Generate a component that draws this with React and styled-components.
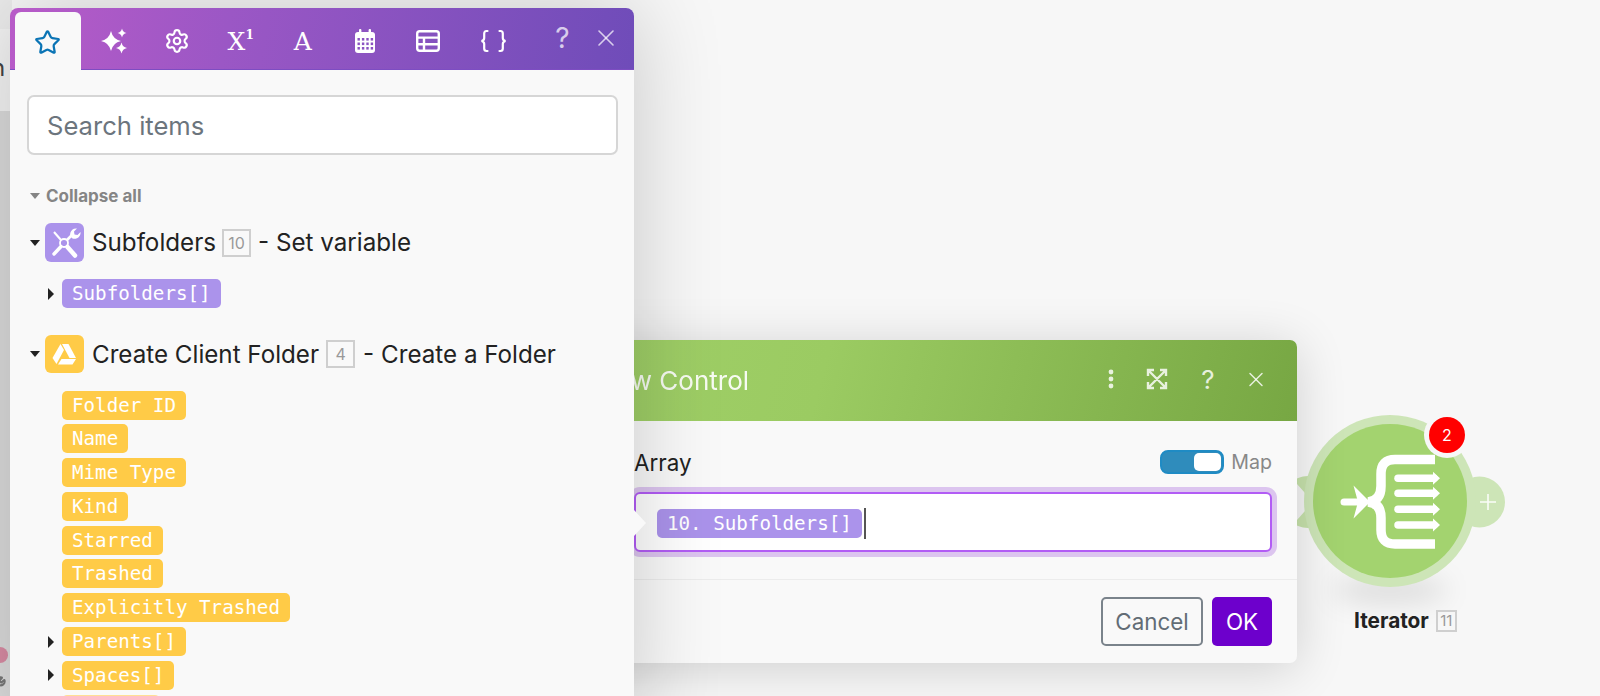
import React from "react";
import styled, { createGlobalStyle } from "styled-components";
import { Star, Settings, X, Wrench } from "lucide-react";

const GlobalStyle = createGlobalStyle`
  html, body {
    margin: 0;
    height: 100%;
  }
  body {
    font-family: Inter, "Noto Sans", sans-serif;
    background: #f7f7f7;
    color: #222;
  }
`;

const Canvas = styled.div`
  position: relative;
  width: 100vw;
  height: 100vh;
  overflow: hidden;
  background: #f7f7f7;
`;

/* bits of the page that peek out to the left of the panel */
const LeftStrip = styled.div`
  position: absolute;
  left: 0;
  top: 0;
  bottom: 0;
  width: 12px;
  display: flex;
  flex-direction: column;
  background: #dcdcdc;
  overflow: hidden;
`;

const StripTop = styled.div`
  height: 30px;
  background: #ececec;
`;

const StripMiddle = styled.div`
  height: 83px;
  background: #f4f4f4;
  color: #444;
  font-size: 24px;
  line-height: 30px;
  padding-top: 24px;
  box-sizing: border-box;
  text-indent: -9px;
`;

const StripDot = styled.div`
  width: 16px;
  height: 16px;
  border-radius: 50%;
  background: #d98ca4;
  margin: 536px 0 0 -8px;
`;

const StripTool = styled.div`
  margin: 13px 0 0 -10px;
  color: #777;
`;

/* mapping panel */
const Panel = styled.div`
  position: absolute;
  left: 10px;
  top: 8px;
  width: 624px;
  height: 720px;
  z-index: 3;
  background: #f9f9f9;
  border-radius: 8px 8px 0 0;
  box-shadow: 0 0 90px rgba(0, 0, 0, 0.2);
  overflow: visible;

  &::after {
    content: "";
    position: absolute;
    left: 100%;
    top: 502px;
    border-left: 12px solid #f9f9f9;
    border-top: 13px solid transparent;
    border-bottom: 13px solid transparent;
  }
`;

const TabBar = styled.div`
  display: flex;
  height: 62px;
  box-sizing: border-box;
  padding: 4px 7px 0 5px;
  border-radius: 8px 8px 0 0;
  border-bottom: 1px solid #7d4dc2;
  background: linear-gradient(100deg, #b85bc8 0%, #9b57c5 35%, #6f4cb9 100%);
`;

const ActiveTab = styled.div`
  width: 66px;
  height: 58px;
  display: flex;
  align-items: center;
  justify-content: center;
  padding-top: 2px;
  box-sizing: border-box;
  background: #f9f9f9;
  border-radius: 6px 6px 0 0;
  color: #0a74b5;
`;

const Tab = styled.div`
  width: 63.2px;
  height: 58px;
  box-sizing: border-box;
  padding-left: ${(p) => p.$shift || 0}px;
  display: flex;
  align-items: center;
  justify-content: center;
  color: #fff;
  flex-shrink: 0;
`;

const TabGlyph = styled.span`
  font-family: "DejaVu Serif", serif;
  font-size: ${(p) => p.$size}px;
  line-height: 1;

  sup {
    font-size: 12px;
    line-height: 0;
    vertical-align: 11px;
    font-weight: 700;
  }
`;

const TabAction = styled.div`
  width: 43px;
  height: 52px;
  display: flex;
  align-items: center;
  justify-content: center;
  color: rgba(255, 255, 255, 0.72);
  font-size: 28px;
  flex-shrink: 0;
  margin-left: ${(p) => p.$gap || 0}px;
`;

const PanelBody = styled.div`
  padding: 25px 16px 0 17px;
`;

const SearchBox = styled.div`
  height: 60px;
  box-sizing: border-box;
  border: 2px solid #d6d6d6;
  border-radius: 7px;
  background: #fff;
  padding-left: 18px;
  display: flex;
  align-items: center;
  color: #6c757d;
  font-size: 25.6px;
`;

const CollapseAll = styled.div`
  display: flex;
  align-items: center;
  gap: 6px;
  margin: 29px 0 0 3px;
  height: 24px;
  color: #858585;
  font-size: 17px;
  font-weight: 700;
`;

const Caret = styled.span`
  display: inline-block;
  width: 0;
  height: 0;
  flex-shrink: 0;
  border-left: 5px solid transparent;
  border-right: 5px solid transparent;
  border-top: 6px solid ${(p) => p.$color || "#222"};
`;

const SectionHead = styled.div`
  display: flex;
  align-items: center;
  margin: ${(p) => p.$top}px 0 0 3px;
  height: ${(p) => p.$height}px;
  font-size: 24.2px;
  white-space: nowrap;
`;

const HeadCaret = styled.span`
  width: 15px;
  flex-shrink: 0;
  display: flex;
  align-items: center;
`;

const ModuleTile = styled.span`
  width: 39px;
  height: ${(p) => p.$height}px;
  border-radius: 6px;
  background: ${(p) => p.$color};
  margin-right: 8px;
  flex-shrink: 0;
  display: flex;
  align-items: center;
  justify-content: center;
`;

const IdBadge = styled.span`
  display: inline-flex;
  align-items: center;
  justify-content: center;
  box-sizing: border-box;
  width: 29px;
  height: 28px;
  margin: 0 ${(p) => p.$after || 8}px 0 ${(p) => p.$before || 7}px;
  border: 2px solid #cfcfcf;
  color: #999;
  font-size: 16px;
`;

const PillList = styled.div`
  display: flex;
  flex-direction: column;
  gap: 4.8px;
  margin: ${(p) => p.$top}px 0 0 21px;
`;

const PillRow = styled.div`
  display: flex;
  align-items: center;
`;

const Expander = styled.span`
  width: 14px;
  flex-shrink: 0;

  &::before {
    content: "";
    display: ${(p) => (p.$on ? "block" : "none")};
    width: 0;
    height: 0;
    border-top: 6px solid transparent;
    border-bottom: 6px solid transparent;
    border-left: 6px solid #222;
  }
`;

const Pill = styled.span`
  display: inline-flex;
  align-items: center;
  height: 29px;
  box-sizing: border-box;
  padding: 0 10px;
  border-radius: 5px;
  background: ${(p) => p.$color};
  color: #fff;
  font-family: "DejaVu Sans Mono", monospace;
  font-size: 19.2px;
  white-space: pre;
`;

/* the next pill down, only its top edge is on screen */
const FadedPill = styled.span`
  display: block;
  width: 98px;
  height: 29px;
  border-radius: 5px;
  background: #ffdf94;
`;

/* flow control dialog */
const Dialog = styled.div`
  position: absolute;
  left: 569px;
  top: 340px;
  width: 728px;
  z-index: 2;
  border-radius: 7px;
  background: #f9f9f9;
  box-shadow: 0 6px 50px rgba(0, 0, 0, 0.16);
`;

const DialogHead = styled.div`
  height: 81px;
  display: flex;
  align-items: center;
  padding: 0 29px 0 24px;
  border-radius: 7px 7px 0 0;
  background: linear-gradient(105deg, #a0d068 0%, #9bcb62 35%, #77a743 100%);
  color: #fff;
`;

const DialogTitle = styled.div`
  font-size: 26px;
  margin-left: 1px;
  margin-right: auto;
  opacity: 0.92;
`;

const HeadAction = styled.div`
  display: flex;
  align-items: center;
  justify-content: center;
  width: ${(p) => p.$width}px;
  margin-left: ${(p) => p.$gap || 0}px;
  margin-bottom: 3px;
  color: rgba(255, 255, 255, 0.82);
  font-size: 26px;
`;

const DialogBody = styled.div`
  padding: 29px 25px 27px 65px;
  border-bottom: 1px solid #ececec;
`;

const FieldTop = styled.div`
  display: flex;
  align-items: center;
  height: 24px;
  margin-bottom: 18px;
  font-size: 22.4px;
`;

const MapSwitch = styled.div`
  margin-left: auto;
  width: 64px;
  height: 24px;
  box-sizing: border-box;
  border: 2px solid #1f8bc4;
  border-radius: 8px;
  background: #2f8cbc;
  display: flex;
  justify-content: flex-end;
  padding: 1px;

  &::before {
    content: "";
    width: 27px;
    border-radius: 5px;
    background: #fff;
  }
`;

const MapLabel = styled.span`
  margin-left: 7px;
  color: #888;
  font-size: 19.6px;
`;

const MapField = styled.div`
  height: 60px;
  box-sizing: border-box;
  border: 2px solid #b25cf5;
  border-radius: 6px;
  background: #fff;
  box-shadow: 0 0 0 5px #dcc5ef;
  padding: 2px 0 0 21px;
  display: flex;
  align-items: center;
`;

const Cursor = styled.span`
  width: 2px;
  height: 31px;
  margin-left: 2px;
  background: #555;
`;

const DialogFoot = styled.div`
  display: flex;
  justify-content: flex-end;
  gap: 9px;
  padding: 17px 25px;
`;

const Button = styled.div`
  height: 49px;
  box-sizing: border-box;
  display: flex;
  align-items: center;
  justify-content: center;
  font-size: 22.4px;
  border-radius: 5px;
  width: ${(p) => (p.$primary ? 60 : 102)}px;
  color: ${(p) => (p.$primary ? "#fff" : "#626c75")};
  background: ${(p) => (p.$primary ? "#6d00cc" : "transparent")};
  border: ${(p) => (p.$primary ? "none" : "2px solid #7a838b")};
`;

/* iterator module on the scenario canvas */
const Node = styled.div`
  position: absolute;
  left: 1280px;
  top: 400px;
  width: 220px;
  z-index: 1;
`;

const NodeArt = styled.svg`
  display: block;
  overflow: visible;

  .shadow {
    filter: blur(13px);
  }
`;

const CountBadge = styled.div`
  position: absolute;
  left: 149px;
  top: 17px;
  width: 36px;
  height: 36px;
  border-radius: 50%;
  background: #ff0000;
  box-shadow: 0 0 0 5px #f7f7f7;
  display: flex;
  align-items: center;
  justify-content: center;
  color: #fff;
  font-size: 16px;
`;

const NodeLabel = styled.div`
  display: flex;
  align-items: center;
  margin-top: 8px;
  padding-left: 74px;
  font-size: 20.8px;
  font-weight: 700;
  color: #222;
`;

const NodeId = styled.span`
  display: inline-flex;
  align-items: center;
  justify-content: center;
  box-sizing: border-box;
  width: 21px;
  height: 22px;
  margin-left: 7px;
  border: 2px solid #cfcfcf;
  color: #999;
  font-size: 15px;
  font-weight: 400;
`;

const sparkle = (x, y, r) =>
  `M${x} ${y - r}Q${x + r * 0.18} ${y - r * 0.18} ${x + r} ${y}Q${x + r * 0.18} ${y + r * 0.18} ${x} ${y + r}Q${x - r * 0.18} ${y + r * 0.18} ${x - r} ${y}Q${x - r * 0.18} ${y - r * 0.18} ${x} ${y - r}Z`;

const SparklesIcon = () => (
  <svg width="26" height="26" viewBox="0 0 26 26" fill="#fff">
    <path d={sparkle(10, 13, 10)} />
    <path d={sparkle(21, 5, 4.5)} />
    <path d={sparkle(20.5, 20, 5.5)} />
  </svg>
);

const CalendarIcon = () => (
  <svg width="20" height="24" viewBox="0 0 20 24">
    <rect x="0" y="3" width="20" height="21" rx="3" fill="#fff" />
    <rect x="4" y="0" width="2.4" height="5" rx="1" fill="#fff" />
    <rect x="13.6" y="0" width="2.4" height="5" rx="1" fill="#fff" />
    {[9, 13.5, 18].map((y) =>
      [2.5, 6.9, 11.3, 15.7].map((x) => (
        <rect key={`${x}-${y}`} x={x} y={y} width="2.4" height="2.6" fill="#8b53c2" />
      ))
    )}
  </svg>
);

const TableIcon = () => (
  <svg width="24" height="22" viewBox="0 0 24 22" fill="none" stroke="#fff" strokeWidth="2.4">
    <rect x="1.2" y="1.2" width="21.6" height="19.6" rx="2.5" />
    <path d="M1 7.6H23M1 14.2H23M8 7.6V21" />
  </svg>
);

const BracesIcon = () => (
  <svg width="27" height="24" viewBox="0 0 27 24" fill="none" stroke="#fff" strokeWidth="2.2" strokeLinecap="round">
    <path d="M7.5 2H6.5Q4.2 2 4.2 4.5V9Q4.2 11.4 1.5 12Q4.2 12.6 4.2 15V19.5Q4.2 22 6.5 22H7.5" />
    <path d="M19.5 2H20.5Q22.8 2 22.8 4.5V9Q22.8 11.4 25.5 12Q22.8 12.6 22.8 15V19.5Q22.8 22 20.5 22H19.5" />
  </svg>
);

const ToolsIcon = () => (
  <svg width="39" height="39" viewBox="0 0 39 39" fill="#fff" stroke="#fff">
    <circle cx="19" cy="20" r="4" fill="none" strokeWidth="1.8" />
    <path d="M9 9L16 17" strokeWidth="2" fill="none" />
    <path d="M22.5 24L30 32.5" strokeWidth="4.5" strokeLinecap="round" fill="none" />
    <path d="M16 23.5L9 31" strokeWidth="3.4" strokeLinecap="round" fill="none" />
    <path d="M22 17L27 12" strokeWidth="2.6" fill="none" />
    <path d="M25.5 13.5a6 6 0 0 1 6.5-8l-3 3 .5 3 3 .5 3-3a6 6 0 0 1-8 6.5z" stroke="none" />
  </svg>
);

const DriveIcon = () => (
  <svg width="39" height="38" viewBox="0 0 39 38" fill="#fff">
    <polygon points="15.5,9 19,15 11.5,29 7.5,23" />
    <polygon points="17,9 23.5,9 31,23 24.5,23" />
    <polygon points="13,29.5 16.5,24 31,24 27.5,29.5" />
  </svg>
);

const ExpandIcon = () => (
  <svg width="22" height="22" viewBox="0 0 22 22" fill="none" stroke="currentColor" strokeWidth="2.4">
    <path d="M2 8V2H8M14 2H20V8M20 14V20H14M8 20H2V14M2 2L20 20M20 2L2 20" />
  </svg>
);

const DotsIcon = () => (
  <svg width="6" height="20" viewBox="0 0 6 20" fill="currentColor">
    <circle cx="3" cy="3" r="2.4" />
    <circle cx="3" cy="10" r="2.4" />
    <circle cx="3" cy="17" r="2.4" />
  </svg>
);

const arrowRows = [54.3, 69.3, 85.3, 101];

const NodeDrawing = () => (
  <NodeArt width="220" height="200" viewBox="0 0 220 200">
    <ellipse className="shadow" cx="110" cy="190" rx="58" ry="14" fill="rgba(0,0,0,0.1)" />
    <circle cx="28" cy="102" r="26" fill="#c6e1ab" />
    <polygon points="17,84 33,102 17,120 0,120 0,84" fill="#f3f3f3" />
    <circle cx="199.5" cy="102" r="25.5" fill="#cde5b7" />
    <path d="M208 94V110M200 102H216" stroke="#fff" strokeWidth="1.6" opacity="0.9" />
    <circle cx="110" cy="101" r="86" fill="#cde5b7" />
    <circle cx="110" cy="101" r="77" fill="#a3d36f" />
    {/* iterator glyph, drawn on the inner circle's own 154px box */}
    <g transform="translate(33 24)" fill="#fff">
      <path
        d="M122 35.5H82Q68 35.5 68 50V62Q68 77 55 78Q68 79 68 94V106Q68 120 82 120H122"
        fill="none"
        stroke="#fff"
        strokeWidth="9.5"
      />
      {arrowRows.map((y) => (
        <g key={y}>
          <path d={`M85 ${y}H121`} stroke="#fff" strokeWidth="7.5" strokeLinecap="round" />
          <polygon points={`120,${y - 6.5} 127,${y} 120,${y + 6.5}`} />
        </g>
      ))}
      <path d="M31 78H44" stroke="#fff" strokeWidth="7" strokeLinecap="round" />
      <polygon points="40.5,61.5 57,78 40.5,94.5 45,78" />
    </g>
  </NodeArt>
);

const driveFields = [
  { name: "Folder ID" },
  { name: "Name" },
  { name: "Mime Type" },
  { name: "Kind" },
  { name: "Starred" },
  { name: "Trashed" },
  { name: "Explicitly Trashed" },
  { name: "Parents[]", nested: true },
  { name: "Spaces[]", nested: true },
];

const PURPLE = "#ab93eb";
const YELLOW = "#ffcb47";

export default function App() {
  return (
    <Canvas>
      <GlobalStyle />
      <LeftStrip>
        <StripTop />
        <StripMiddle>n</StripMiddle>
        <StripDot />
        <StripTool>
          <Wrench size={16} strokeWidth={3} />
        </StripTool>
      </LeftStrip>

      <Node>
        <NodeDrawing />
        <CountBadge>2</CountBadge>
        <NodeLabel>
          Iterator<NodeId>11</NodeId>
        </NodeLabel>
      </Node>

      <Dialog>
        <DialogHead>
          <DialogTitle>Flow Control</DialogTitle>
          <HeadAction $width={12}>
            <DotsIcon />
          </HeadAction>
          <HeadAction $width={22} $gap={29}>
            <ExpandIcon />
          </HeadAction>
          <HeadAction $width={20} $gap={30}>?</HeadAction>
          <HeadAction $width={24} $gap={26}>
            <X size={27} strokeWidth={1.5} />
          </HeadAction>
        </DialogHead>
        <DialogBody>
          <FieldTop>
            Array
            <MapSwitch />
            <MapLabel>Map</MapLabel>
          </FieldTop>
          <MapField>
            <Pill $color={PURPLE}>10. Subfolders[]</Pill>
            <Cursor />
          </MapField>
        </DialogBody>
        <DialogFoot>
          <Button>Cancel</Button>
          <Button $primary>OK</Button>
        </DialogFoot>
      </Dialog>

      <Panel>
        <TabBar>
          <ActiveTab>
            <Star size={27} strokeWidth={2} />
          </ActiveTab>
          <Tab $shift={3}>
            <SparklesIcon />
          </Tab>
          <Tab $shift={4}>
            <Settings size={26} strokeWidth={2} />
          </Tab>
          <Tab $shift={4}>
            <TabGlyph $size={25}>
              X<sup>1</sup>
            </TabGlyph>
          </Tab>
          <Tab $shift={2}>
            <TabGlyph $size={25}>A</TabGlyph>
          </Tab>
          <Tab>
            <CalendarIcon />
          </Tab>
          <Tab $shift={-2}>
            <TableIcon />
          </Tab>
          <Tab $shift={4}>
            <BracesIcon />
          </Tab>
          <TabAction $gap={18}>?</TabAction>
          <TabAction>
            <X size={28} strokeWidth={1.4} />
          </TabAction>
        </TabBar>
        <PanelBody>
          <SearchBox>Search items</SearchBox>
          <CollapseAll>
            <Caret $color="#858585" />
            Collapse all
          </CollapseAll>
          <SectionHead $top={15} $height={39}>
            <HeadCaret>
              <Caret />
            </HeadCaret>
            <ModuleTile $color={PURPLE} $height={39}>
              <ToolsIcon />
            </ModuleTile>
            Subfolders<IdBadge $before={6} $after={7}>10</IdBadge>- Set variable
          </SectionHead>
          <PillList $top={17}>
            <PillRow>
              <Expander $on />
              <Pill $color={PURPLE}>Subfolders[]</Pill>
            </PillRow>
          </PillList>
          <SectionHead $top={27} $height={38}>
            <HeadCaret>
              <Caret />
            </HeadCaret>
            <ModuleTile $color={YELLOW} $height={38}>
              <DriveIcon />
            </ModuleTile>
            Create Client Folder<IdBadge>4</IdBadge>- Create a Folder
          </SectionHead>
          <PillList $top={17.5}>
            {driveFields.map((field) => (
              <PillRow key={field.name}>
                <Expander $on={field.nested} />
                <Pill $color={YELLOW}>{field.name}</Pill>
              </PillRow>
            ))}
            <PillRow>
              <Expander />
              <FadedPill />
            </PillRow>
          </PillList>
        </PanelBody>
      </Panel>
    </Canvas>
  );
}
